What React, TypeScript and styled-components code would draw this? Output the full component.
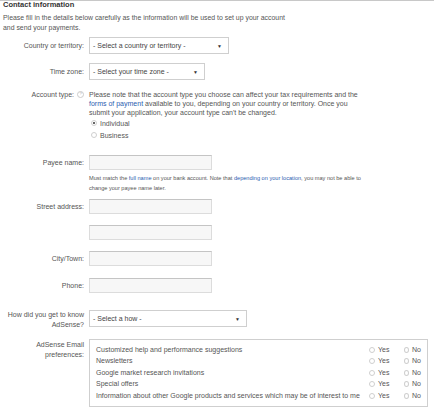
import styled, { createGlobalStyle } from "styled-components";

const GlobalStyle = createGlobalStyle`
  html, body {
    margin: 0;
    padding: 0;
    background: #fff;
  }
  body {
    font-family: "Liberation Sans", Arial, sans-serif;
    font-size: 7px;
    color: #555;
  }
`;

const Page = styled.div`
  width: 434px;
  height: 408px;
  border-top: 1px solid #c8c8c8;
  box-sizing: border-box;
  padding: 0 3px;
  overflow: hidden;
`;

const Title = styled.h2`
  margin: 0;
  font-size: 7.5px;
  font-weight: bold;
  color: #333;
  line-height: 8px;
`;

const Intro = styled.p`
  margin: 4px 0 0;
  width: 288px;
  font-size: 6.9px;
  line-height: 10px;
  color: #555;
`;

const Row = styled.div<{ $top: number }>`
  display: grid;
  grid-template-columns: 81px 1fr;
  column-gap: 5px;
  margin-top: ${(p) => p.$top}px;
  align-items: start;
`;

const Label = styled.label<{ $pt?: number; $lh?: number }>`
  text-align: right;
  line-height: ${(p) => p.$lh ?? 10}px;
  padding-top: ${(p) => p.$pt ?? 3}px;
  color: #555;
  display: flex;
  justify-content: flex-end;
  align-items: center;
  gap: 3px;
`;

const Help = styled.span`
  display: inline-flex;
  align-items: center;
  justify-content: center;
  width: 5px;
  height: 5px;
  border: 1px solid #ccc;
  border-radius: 50%;
  font-size: 4px;
  color: #aaa;
  line-height: 1;
`;

const Select = styled.div<{ $w: number }>`
  width: ${(p) => p.$w}px;
  height: 17px;
  box-sizing: border-box;
  border: 1px solid #cfcfcf;
  background: #fff;
  display: flex;
  align-items: center;
  justify-content: space-between;
  padding: 0 6px 0 3px;
  color: #444;
`;

const Arrow = styled.span`
  font-size: 5px;
  color: #333;
`;

const Input = styled.div<{ $w?: number }>`
  width: ${(p) => p.$w ?? 123}px;
  height: 15px;
  box-sizing: border-box;
  border: 1px solid #dcdcdc;
  border-top-color: #c4c4c4;
  background: #f7f7f7;
`;

const Para = styled.p`
  margin: 0;
  width: 272px;
  line-height: 9px;
  color: #555;
`;

const Link = styled.a`
  color: #2a5db0;
  text-decoration: none;
`;

const RadioList = styled.div`
  display: flex;
  flex-direction: column;
  gap: 3px;
  margin-top: 2px;
  padding-left: 2px;
`;

const RadioItem = styled.div`
  display: flex;
  align-items: center;
  gap: 3px;
  line-height: 9px;
`;

const Radio = styled.span<{ $checked?: boolean }>`
  width: 6px;
  height: 6px;
  box-sizing: border-box;
  border: 1px solid #cfcfcf;
  border-radius: 50%;
  background: #fff;
  display: inline-flex;
  align-items: center;
  justify-content: center;
  &::after {
    content: "";
    width: 2px;
    height: 2px;
    border-radius: 50%;
    background: ${(p) => (p.$checked ? "#333" : "transparent")};
  }
`;

const Note = styled.p`
  margin: 3px 0 0;
  width: 280px;
  font-size: 5.6px;
  line-height: 10px;
  color: #555;
`;

const Prefs = styled.div`
  width: 339px;
  box-sizing: border-box;
  border: 1px solid #cfcfcf;
  padding: 4px 6px 4px 6px;
  display: flex;
  flex-direction: column;
`;

const PrefRow = styled.div`
  display: grid;
  grid-template-columns: 1fr 35px 17px;
  align-items: center;
  height: 11.5px;
  line-height: 10px;
  color: #555;
`;

const Choice = styled.span`
  display: flex;
  align-items: center;
  gap: 3px;
`;

const prefs = [
  "Customized help and performance suggestions",
  "Newsletters",
  "Google market research invitations",
  "Special offers",
  "Information about other Google products and services which may be of interest to me",
];

export default function App() {
  return (
    <>
      <GlobalStyle />
      <Page>
        <Title>Contact information</Title>
        <Intro>
          Please fill in the details below carefully as the information will be used to set up your account and send
          your payments.
        </Intro>

        <Row $top={4}>
          <Label $pt={3.5}>Country or territory:</Label>
          <Select $w={140}>
            <span>- Select a country or territory -</span>
            <Arrow>▼</Arrow>
          </Select>
        </Row>

        <Row $top={9}>
          <Label $pt={3.5}>Time zone:</Label>
          <Select $w={116}>
            <span>- Select your time zone -</span>
            <Arrow>▼</Arrow>
          </Select>
        </Row>

        <Row $top={9.5}>
          <Label $pt={0} $lh={9}>
            Account type: <Help>?</Help>
          </Label>
          <div>
            <Para>
              Please note that the account type you choose can affect your tax requirements and the{" "}
              <Link>forms of payment</Link> available to you, depending on your country or territory. Once you submit
              your application, your account type can't be changed.
            </Para>
            <RadioList>
              <RadioItem>
                <Radio $checked />
                Individual
              </RadioItem>
              <RadioItem>
                <Radio />
                Business
              </RadioItem>
            </RadioList>
          </div>
        </Row>

        <Row $top={15.5}>
          <Label $pt={2.5}>Payee name:</Label>
          <div>
            <Input />
            <Note>
              Must match the <Link>full name</Link> on your bank account. Note that{" "}
              <Link>depending on your location</Link>, you may not be able to change your payee name later.
            </Note>
          </div>
        </Row>

        <Row $top={6}>
          <Label $pt={2.5}>Street address:</Label>
          <Input />
        </Row>
        <Row $top={11}>
          <Label />
          <Input />
        </Row>
        <Row $top={11}>
          <Label $pt={2.5}>City/Town:</Label>
          <Input />
        </Row>
        <Row $top={12}>
          <Label $pt={2.5}>Phone:</Label>
          <Input />
        </Row>

        <Row $top={17}>
          <Label $pt={0}>
            How did you get to know
            <br />
            AdSense?
          </Label>
          <Select $w={158}>
            <span>- Select a how -</span>
            <Arrow>▼</Arrow>
          </Select>
        </Row>

        <Row $top={9}>
          <Label $pt={1}>
            AdSense Email
            <br />
            preferences:
          </Label>
          <Prefs>
            {prefs.map((t) => (
              <PrefRow key={t}>
                <span>{t}</span>
                <Choice>
                  <Radio />
                  Yes
                </Choice>
                <Choice>
                  <Radio />
                  No
                </Choice>
              </PrefRow>
            ))}
          </Prefs>
        </Row>
      </Page>
    </>
  );
}
